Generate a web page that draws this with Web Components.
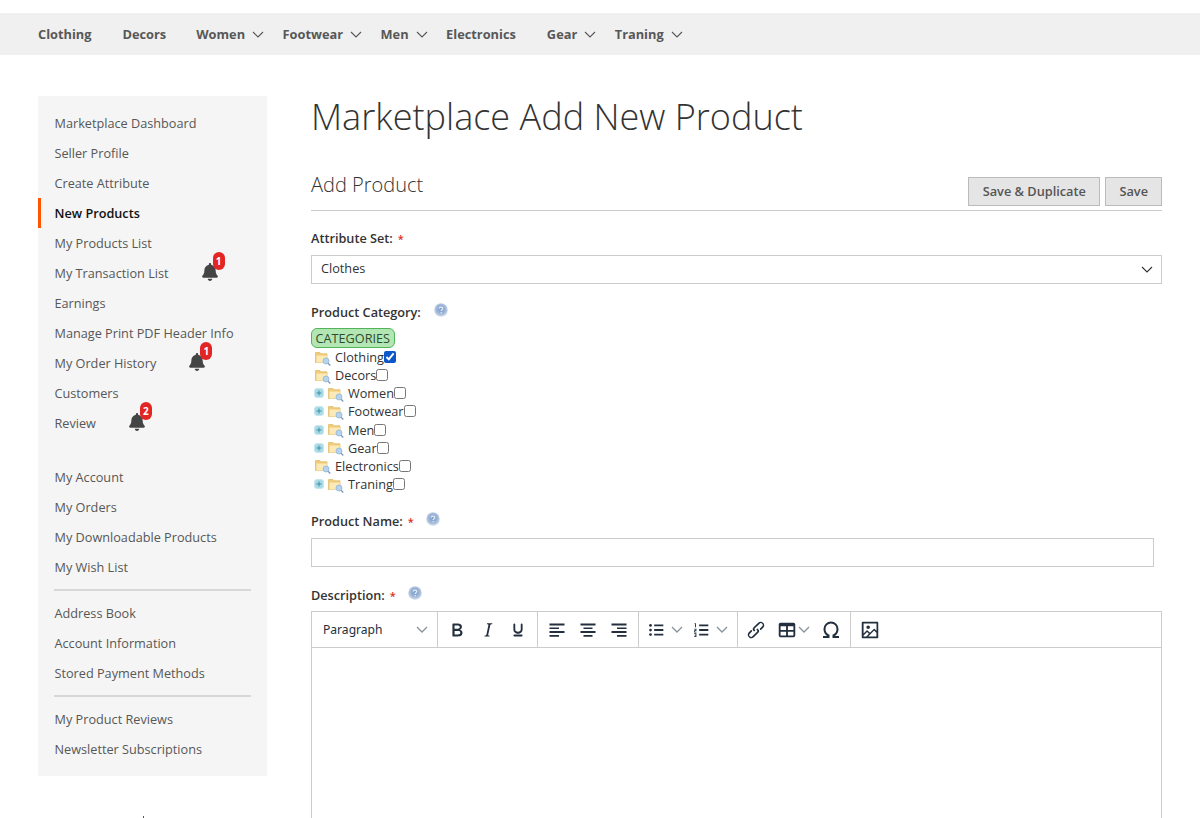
<!DOCTYPE html>
<html lang="en">
<head>
<meta charset="utf-8">
<title>Marketplace Add New Product</title>
<style>
  html, body { margin: 0; height: 818px; overflow: hidden; background: #fff; }
  body { font-family: "Open Sans", "Liberation Sans", sans-serif; color: #333; }
</style>
</head>
<body>
<shop-page>
  <top-nav slot="nav">
    <nav-item style="--x:31px">Clothing</nav-item>
    <nav-item style="--x:30px">Decors</nav-item>
    <nav-item caret>Women</nav-item>
    <nav-item caret>Footwear</nav-item>
    <nav-item caret>Men</nav-item>
    <nav-item style="--x:31px">Electronics</nav-item>
    <nav-item caret>Gear</nav-item>
    <nav-item caret>Traning</nav-item>
  </top-nav>

  <side-menu slot="side">
    <side-link>Marketplace Dashboard</side-link>
    <side-link>Seller Profile</side-link>
    <side-link>Create Attribute</side-link>
    <side-link current>New Products</side-link>
    <side-link>My Products List</side-link>
    <side-link count="1">My Transaction List</side-link>
    <side-link>Earnings</side-link>
    <side-link>Manage Print PDF Header Info</side-link>
    <side-link count="1">My Order History</side-link>
    <side-link>Customers</side-link>
    <side-link count="2">Review</side-link>
    <menu-gap></menu-gap>
    <side-link>My Account</side-link>
    <side-link>My Orders</side-link>
    <side-link>My Downloadable Products</side-link>
    <side-link>My Wish List</side-link>
    <menu-rule></menu-rule>
    <side-link>Address Book</side-link>
    <side-link>Account Information</side-link>
    <side-link>Stored Payment Methods</side-link>
    <menu-rule></menu-rule>
    <side-link>My Product Reviews</side-link>
    <side-link>Newsletter Subscriptions</side-link>
  </side-menu>

  <product-form slot="main"></product-form>
</shop-page>

<script>
const icons = {
  caret: '<svg width="12" height="7" viewBox="0 0 12 7" fill="none" stroke="currentColor" stroke-width="1.1"><path d="M1 1l5 5 5-5"/></svg>',
  bell: '<svg width="16" height="18" viewBox="0 0 448 512" fill="#444"><path d="M224 512c35.300 0 64-28.700 64-64H160c0 35.300 28.700 64 64 64zm215.400-149.700c-19.300-20.800-55.500-52-55.500-154.300 0-77.700-54.500-139.900-128-155.200V32c0-17.700-14.300-32-32-32s-32 14.300-32 32v20.800C118.600 68.100 64.100 130.300 64.100 208c0 102.300-36.200 133.500-55.500 154.300-6 6.400-8.700 14.100-8.600 21.700.1 16.400 13 32 32.100 32h383.800c19.100 0 32-15.600 32.100-32 .1-7.600-2.600-15.300-8.600-21.700z"/></svg>',
  help: '<svg width="14" height="14" viewBox="0 0 14 14"><defs><radialGradient id="h" cx=".5" cy=".45" r=".55"><stop offset="0" stop-color="#7f9cc8"/><stop offset=".6" stop-color="#9db6d8"/><stop offset="1" stop-color="#d5e0ee"/></radialGradient></defs><circle cx="7" cy="7" r="6.800" fill="url(#h)"/><path d="M5.300 5.600c0-1 .8-1.500 1.700-1.500s1.700.5 1.700 1.400c0 1.200-1.500 1.200-1.500 2.400" fill="none" stroke="#e6edf6" stroke-width="1.200"/><circle cx="7.200" cy="9.700" r=".8" fill="#e6edf6"/></svg>',
  folder: '<svg width="16" height="15" viewBox="0 0 16 15"><path d="M.5 1.500h4.500l1 1.300h6v8.700H.5z" fill="#f0cb78" stroke="#e3bd6c" stroke-width=".8"/><path d="M1.500 4.500h10.500l-1 7H1.500z" fill="#fbeab8"/><circle cx="11" cy="10" r="3" fill="#b6d3ee" stroke="#92b6d8" stroke-width=".8"/><path d="M13 12.200l2.300 2.300" stroke="#7d9cbd" stroke-width="1.300"/></svg>',
  plus: '<svg width="10" height="10" viewBox="0 0 10 10"><rect x=".5" y=".5" width="9" height="9" rx="2.500" fill="#a9dbe6" stroke="#c7e6ed"/><path d="M2.500 5h5M5 2.500v5" stroke="#3f8fa8" stroke-width="1"/></svg>',
  chev: '<svg width="12" height="7" viewBox="0 0 12 7" fill="none" stroke="#8a9299" stroke-width="1.300"><path d="M1 1l5 5 5-5"/></svg>',
  bold: '<svg width="22" height="22" viewBox="0 0 24 24" fill="#222f3e"><path d="M7.800 19c-.3 0-.5 0-.6-.2l-.2-.5V5.700c0-.2 0-.4.2-.5l.6-.2h5c1.500 0 2.700.3 3.500 1 .7.600 1.100 1.400 1.100 2.500a3 3 0 0 1-.6 1.900c-.4.600-1 1-1.600 1.200.4.100.9.300 1.300.6s.8.700 1 1.200c.4.400.5 1 .5 1.600 0 1.300-.4 2.300-1.300 3-.8.700-2.100 1-3.800 1H7.800zm5-8.300c.6 0 1.200-.1 1.600-.5.400-.3.600-.7.600-1.300 0-1.100-.8-1.700-2.300-1.700H9.300v3.500h3.400zm.5 6c.7 0 1.300-.1 1.700-.4.400-.4.600-.9.600-1.500s-.2-1-.7-1.400c-.4-.3-1-.4-2-.4H9.400v3.800h4z"/></svg>',
  italic: '<svg width="22" height="22" viewBox="0 0 24 24" fill="#222f3e"><path d="M16.700 4.700l-.1.900h-.3c-.6 0-1 0-1.400.3-.3.300-.4.600-.5 1.100l-2.100 9.800v.6c0 .5.400.8 1.400.8h.2l-.2.800H8l.2-.8h.2c1.100 0 1.800-.5 2-1.500l2-9.800.1-.5c0-.6-.4-.8-1.400-.8h-.3l.2-.9h5.800z"/></svg>',
  underline: '<svg width="22" height="22" viewBox="0 0 24 24" fill="#222f3e"><path d="M16 5c.6 0 1 .4 1 1v5.500a4 4 0 0 1-.4 1.800l-1 1.400a5.300 5.300 0 0 1-5.500 1 5 5 0 0 1-1.600-1c-.5-.4-.8-.9-1.100-1.400a4 4 0 0 1-.4-1.800V6c0-.6.4-1 1-1s1 .4 1 1v5.500c0 .3 0 .6.2 1l.6.700a3.300 3.300 0 0 0 2.200.8 3.400 3.400 0 0 0 2.200-.8c.3-.2.400-.5.600-.8l.2-.9V6c0-.6.4-1 1-1zM8 17h8c.6 0 1 .4 1 1s-.4 1-1 1H8a1 1 0 0 1 0-2z"/></svg>',
  left: '<svg width="24" height="24" viewBox="0 0 24 24" fill="#222f3e"><path d="M4.500 5.500h15v2h-15zM4.500 9.500h9.500v1.500H4.500zM4.500 13h15v2h-15zM4.500 17h9.500v1.800H4.500z"/></svg>',
  center: '<svg width="24" height="24" viewBox="0 0 24 24" fill="#222f3e"><path d="M4.500 5.500h15v2h-15zM7.500 9.500h9V11h-9zM4.500 13h15v2h-15zM7.500 17h9v1.800h-9z"/></svg>',
  right: '<svg width="24" height="24" viewBox="0 0 24 24" fill="#222f3e"><path d="M4.500 5.500h15v2h-15zM10 9.500h9.500V11H10zM4.500 13h15v2h-15zM10 17h9.500v1.800H10z"/></svg>',
  bullets: '<svg width="22" height="22" viewBox="0 0 24 24" fill="#222f3e"><path d="M10 6h10v2H10zM10 11h10v2H10zM10 16h10v2H10z"/><circle cx="6" cy="7" r="1.500"/><circle cx="6" cy="12" r="1.500"/><circle cx="6" cy="17" r="1.500"/></svg>',
  numbers: '<svg width="22" height="22" viewBox="0 0 24 24" fill="#222f3e"><path d="M10 6h10v2H10zM10 11h10v2H10zM10 16h10v2H10zM5 4.500h1.500V9H5.500V5.500H5zM4.500 10.500h2.500v2.700H5.500v.8H7v.8H4.500v-2.400H6v-1H4.500zM4.500 15.500H7v4H4.500v-.8H6v-.8H5v-.7h1v-.9H4.500z"/></svg>',
  link: '<svg width="22" height="22" viewBox="0 0 24 24" fill="#222f3e"><path d="M6.200 12.300a1 1 0 0 1 1.400 1.400l-2.100 2.100a2 2 0 1 0 2.800 2.800l4.800-4.800a1 1 0 0 0 0-1.400 1 1 0 1 1 1.400-1.300 2.900 2.900 0 0 1 0 4L9.600 20a3.900 3.900 0 0 1-5.500-5.500l2-2zm11.600-.6a1 1 0 0 1-1.400-1.400l2.100-2.100a2 2 0 1 0-2.800-2.800L10.700 10.200a1 1 0 0 0 0 1.400 1 1 0 1 1-1.400 1.400 2.900 2.900 0 0 1 0-4L14.400 4a3.900 3.900 0 0 1 5.500 5.500l-2 2z"/></svg>',
  table: '<svg width="22" height="22" viewBox="0 0 24 24" fill="#222f3e"><path fill-rule="evenodd" d="M19 4a2 2 0 0 1 2 2v12a2 2 0 0 1-2 2H5a2 2 0 0 1-2-2V6c0-1.100.9-2 2-2h14zM5 14v4h6v-4H5zm14 0h-6v4h6v-4zm0-6h-6v4h6V8zM5 12h6V8H5v4z"/></svg>',
  omega: '<svg width="24" height="24" viewBox="0 0 24 24" fill="none" stroke="#222f3e" stroke-width="2"><path d="M4 19h5.500v-1.500A7 7 0 0 1 5.500 11a6.500 6.500 0 0 1 13 0 7 7 0 0 1-4 6.500V19H20"/></svg>',
  image: '<svg width="22" height="22" viewBox="0 0 24 24" fill="#222f3e"><path fill-rule="evenodd" d="M5 15.700l3.300-3.200c.3-.3.700-.3 1 0L12 15l4.100-4c.3-.4.800-.4 1 0l2 1.900V5H5v10.700zM5 18v1h3l2.800-2.900-2-2L5 17.900zm14-3l-2.500-2.400-6.400 6.500H19v-4zM4 3h16c.6 0 1 .4 1 1v16c0 .6-.4 1-1 1H4a1 1 0 0 1-1-1V4c0-.6.4-1 1-1zm6 8a2 2 0 1 0 0-4 2 2 0 0 0 0 4z"/></svg>'
};

class ShopPage extends HTMLElement {
  constructor() {
    super();
    this.attachShadow({ mode: 'open' }).innerHTML = `
      <style>
        :host { display: block; padding-top: 13px; }
        .columns { display: flex; padding: 41px 38px 0; gap: 44px; }
        .side { flex: 0 0 229px; }
        .main { flex: 1 1 auto; min-width: 0; }
        .cut { width: 1px; height: 4px; margin: 40px 0 0 105px; background: #555; }
      </style>
      <slot name="nav"></slot>
      <div class="columns">
        <div class="side"><slot name="side"></slot><div class="cut"></div></div>
        <div class="main"><slot name="main"></slot></div>
      </div>`;
  }
}

class TopNav extends HTMLElement {
  constructor() {
    super();
    this.attachShadow({ mode: 'open' }).innerHTML = `
      <style>
        :host { display: flex; align-items: center; box-sizing: border-box; height: 42px; padding-left: 38px; background: #f0f0f0; }
      </style>
      <slot></slot>`;
  }
}

class NavItem extends HTMLElement {
  constructor() {
    super();
    this.attachShadow({ mode: 'open' }).innerHTML = `
      <style>
        :host { display: inline-flex; align-items: center; margin-right: var(--x, 18.5px); font-size: 12.8px; font-weight: 700; color: #575757; white-space: nowrap; }
        span { display: inline-flex; margin-left: 7px; }
      </style>
      <slot></slot><span></span>`;
    const caret = this.shadowRoot.querySelector('span');
    if (this.hasAttribute('caret')) caret.innerHTML = icons.caret;
    else caret.remove();
  }
}

class SideMenu extends HTMLElement {
  constructor() {
    super();
    this.attachShadow({ mode: 'open' }).innerHTML = `
      <style>
        :host { display: block; padding: 12px 0; background: #f5f5f5; }
      </style>
      <slot></slot>`;
  }
}

class SideLink extends HTMLElement {
  static get observedAttributes() { return ['count']; }

  constructor() {
    super();
    this.attachShadow({ mode: 'open' }).innerHTML = `
      <style>
        :host { display: flex; align-items: center; height: 30px; padding-left: 16.5px; font-size: 12.7px; color: #575757; white-space: nowrap; }
        :host([current]) { padding-left: 13.5px; border-left: 3px solid #ff5501; color: #111; font-weight: 600; }
        .bell { position: relative; display: none; margin-left: 33px; height: 18px; top: -1px; }
        .badge { position: absolute; left: 11px; top: -11px; width: 12px; height: 18px; border-radius: 6px; background: #e22626; color: #fff; font-size: 10px; font-weight: 700; line-height: 18px; text-align: center; }
      </style>
      <slot></slot>
      <span class="bell">${icons.bell}<span class="badge"></span></span>`;
  }

  attributeChangedCallback(name, old, value) {
    this.shadowRoot.querySelector('.bell').style.display = 'inline-block';
    this.shadowRoot.querySelector('.badge').textContent = value;
  }
}

class MenuGap extends HTMLElement {
  constructor() {
    super();
    this.attachShadow({ mode: 'open' }).innerHTML = `<style>:host { display: block; height: 24px; }</style>`;
  }
}

class MenuRule extends HTMLElement {
  constructor() {
    super();
    this.attachShadow({ mode: 'open' }).innerHTML = `
      <style>
        :host { display: block; height: 2px; margin: 7px 16px 7px 16px; background: #d8d8d8; }
      </style>`;
  }
}

class FieldLabel extends HTMLElement {
  constructor() {
    super();
    this.attachShadow({ mode: 'open' }).innerHTML = `
      <style>
        :host { display: flex; align-items: center; height: 20px; font-size: 12.7px; font-weight: 600; color: #333; }
        .star { color: #e02b27; font-size: 11px; margin-left: 5px; }
        .help { display: inline-flex; position: relative; top: -2px; }
      </style>
      <slot></slot><span class="star">*</span><span class="help">${icons.help}</span>`;
    if (!this.hasAttribute('required')) this.shadowRoot.querySelector('.star').remove();
    const help = this.shadowRoot.querySelector('.help');
    if (this.hasAttribute('help')) help.style.marginLeft = this.getAttribute('help') + 'px';
    else help.remove();
  }
}

class CategoryTree extends HTMLElement {
  constructor() {
    super();
    this.attachShadow({ mode: 'open' }).innerHTML = `
      <style>
        :host { display: block; font-size: 12.7px; color: #333; }
        .root { display: inline-block; height: 18px; line-height: 18px; padding: 0 3.5px; border: 1px solid #54b35a; border-radius: 6px; background: #b2e7b4; color: #2f4a30; }
        .rows { display: flex; flex-direction: column; }
      </style>
      <div class="root">CATEGORIES</div>
      <div class="rows"><slot></slot></div>`;
  }
}

class TreeNode extends HTMLElement {
  constructor() {
    super();
    this.attachShadow({ mode: 'open' }).innerHTML = `
      <style>
        :host { display: flex; align-items: center; height: 18.15px; padding-left: 3px; }
        .plus { display: inline-flex; margin-right: 3px; }
        .folder { display: inline-flex; margin: 2px 4px 0 1px; }
        input { width: 12px; height: 12px; margin: 0; accent-color: #0b57c9; }
      </style>
      <span class="plus">${icons.plus}</span><span class="folder">${icons.folder}</span><slot></slot><input type="checkbox">`;
    if (!this.hasAttribute('branch')) this.shadowRoot.querySelector('.plus').remove();
    this.shadowRoot.querySelector('input').checked = this.hasAttribute('checked');
  }
}

class EditorTool extends HTMLElement {
  constructor() {
    super();
    const menu = this.hasAttribute('menu') ? icons.chev : '';
    this.attachShadow({ mode: 'open' }).innerHTML = `
      <style>
        :host { display: inline-flex; align-items: center; justify-content: var(--align, center); flex: 0 0 auto; height: 35px; }
        span { display: inline-flex; }
        .menu { margin-left: var(--gap, 4px); }
      </style>
      <span>${icons[this.getAttribute('icon')]}</span>${menu ? `<span class="menu">${menu}</span>` : ''}`;
  }
}

class EditorGroup extends HTMLElement {
  constructor() {
    super();
    this.attachShadow({ mode: 'open' }).innerHTML = `
      <style>
        :host { display: flex; align-items: center; box-sizing: border-box; height: 35px; border-right: 1px solid #ccc; }
      </style>
      <slot></slot>`;
  }
}

class RichEditor extends HTMLElement {
  constructor() {
    super();
    this.attachShadow({ mode: 'open' }).innerHTML = `
      <style>
        :host { display: block; box-sizing: border-box; height: 400px; border: 1px solid #ccc; }
        .bar { display: flex; height: 35px; border-bottom: 1px solid #ccc; overflow: hidden; font-family: "Noto Sans", sans-serif; }
        .format { display: flex; align-items: center; justify-content: space-between; box-sizing: border-box; width: 126px; height: 35px; padding: 0 9px 0 11px; border-right: 1px solid #ccc; font-size: 12.1px; color: #222f3e; }
      </style>
      <div class="bar">
        <div class="format"><span>Paragraph</span>${icons.chev}</div>
        <slot></slot>
      </div>`;
  }
}

class ProductForm extends HTMLElement {
  constructor() {
    super();
    this.attachShadow({ mode: 'open' }).innerHTML = `
      <style>
        :host { display: block; }
        h1 { margin: 0; height: 44px; font-size: 36.05px; line-height: 40px; font-weight: 300; color: #333; white-space: nowrap; }
        .head { display: flex; justify-content: space-between; align-items: flex-start; height: 33px; margin-top: 37px; border-bottom: 1px solid #ccc; }
        h2 { margin: 0; font-size: 20px; line-height: 15px; font-weight: 300; color: #333; }
        .actions { display: flex; gap: 5px; }
        button { box-sizing: border-box; height: 29px; padding: 0 13.5px 2px; border: 1px solid #bbb; background: #e5e5e5; color: #555; font: 600 12.75px "Open Sans", sans-serif; }
        button + button { padding: 0 13px 2px; }
        .select { display: flex; align-items: center; justify-content: space-between; box-sizing: border-box; height: 29px; padding: 0 8px 0 9px; margin-top: 7px; border: 1px solid #ccc; font-size: 12.7px; color: #333; }
        .select span { margin-top: -3px; }
        .name { box-sizing: border-box; width: 843px; height: 29px; margin-top: 7px; border: 1px solid #ccc; }
      </style>
      <h1>Marketplace Add New Product</h1>
      <div class="head">
        <h2>Add Product</h2>
        <div class="actions"><button>Save &amp; Duplicate</button><button>Save</button></div>
      </div>
      <field-label required style="margin-top:17px">Attribute Set:</field-label>
      <div class="select"><span>Clothes</span>${icons.caret}</div>
      <field-label help="13" style="margin-top:18px">Product Category:</field-label>
      <category-tree style="margin-top:6px">
        <tree-node checked>Clothing</tree-node>
        <tree-node>Decors</tree-node>
        <tree-node branch>Women</tree-node>
        <tree-node branch>Footwear</tree-node>
        <tree-node branch>Men</tree-node>
        <tree-node branch>Gear</tree-node>
        <tree-node>Electronics</tree-node>
        <tree-node branch>Traning</tree-node>
      </category-tree>
      <field-label required help="12" style="margin-top:18px">Product Name:</field-label>
      <div class="name"></div>
      <field-label required help="12" style="margin-top:18px">Description:</field-label>
      <rich-editor style="margin-top:6px">
        <editor-group style="width:100px;padding-left:4px">
          <editor-tool icon="bold" style="width:30.5px"></editor-tool>
          <editor-tool icon="italic" style="width:30.5px"></editor-tool>
          <editor-tool icon="underline" style="width:30px"></editor-tool>
        </editor-group>
        <editor-group style="width:101px;padding-left:3px">
          <editor-tool icon="left" style="width:31px"></editor-tool>
          <editor-tool icon="center" style="width:31px"></editor-tool>
          <editor-tool icon="right" style="width:31px"></editor-tool>
        </editor-group>
        <editor-group style="width:99px;padding-left:6px">
          <editor-tool icon="bullets" menu style="width:45px;--align:flex-start"></editor-tool>
          <editor-tool icon="numbers" menu></editor-tool>
        </editor-group>
        <editor-group style="width:113px;padding-left:7px">
          <editor-tool icon="link" style="width:31px;--align:flex-start"></editor-tool>
          <editor-tool icon="table" menu style="width:44px;--gap:0px;--align:flex-start"></editor-tool>
          <editor-tool icon="omega" style="margin-left:-1px"></editor-tool>
        </editor-group>
        <editor-group style="width:36px;padding-left:8px;border-right:0">
          <editor-tool icon="image"></editor-tool>
        </editor-group>
      </rich-editor>`;
  }
}

customElements.define('shop-page', ShopPage);
customElements.define('top-nav', TopNav);
customElements.define('nav-item', NavItem);
customElements.define('side-menu', SideMenu);
customElements.define('side-link', SideLink);
customElements.define('menu-gap', MenuGap);
customElements.define('menu-rule', MenuRule);
customElements.define('field-label', FieldLabel);
customElements.define('category-tree', CategoryTree);
customElements.define('tree-node', TreeNode);
customElements.define('editor-tool', EditorTool);
customElements.define('editor-group', EditorGroup);
customElements.define('rich-editor', RichEditor);
customElements.define('product-form', ProductForm);
</script>
</body>
</html>
